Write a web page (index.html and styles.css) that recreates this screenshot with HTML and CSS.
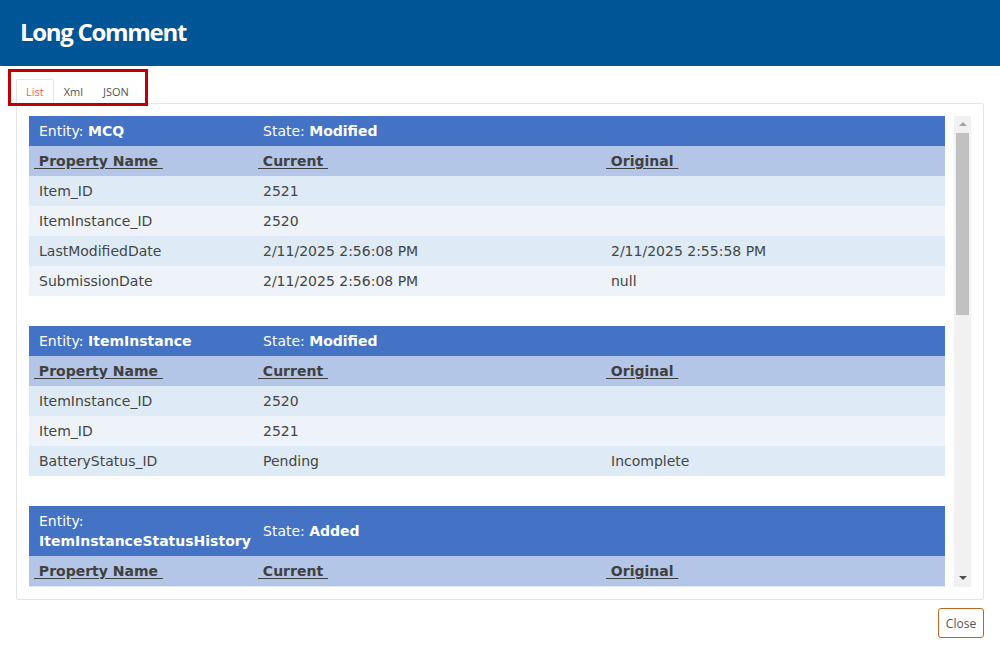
FILE: index.html
```html
<!DOCTYPE html>
<html>
<head>
<meta charset="utf-8">
<title>Long Comment</title>
<link rel="stylesheet" href="styles.css">
</head>
<body>
<div class="modal">
  <header class="modal-header"><h1 class="modal-title">Long Comment</h1></header>
  <div class="modal-body">
    <div class="tabs-wrap">
      <ul class="tabs">
        <li class="tab active">List</li>
        <li class="tab">Xml</li>
        <li class="tab">JSON</li>
      </ul>
      <div class="highlight"></div>
    </div>
    <div class="panel">
      <div class="scroller">
        <div class="scroll-content">
          <table class="entity">
            <colgroup><col class="c1"><col class="c2"><col class="c3"></colgroup>
            <tr class="ent-row"><td>Entity: <b>MCQ</b></td><td colspan="2">State: <b>Modified</b></td></tr>
            <tr class="head-row"><th><a>&nbsp;Property Name&nbsp;</a></th><th><a>&nbsp;Current&nbsp;</a></th><th><a>&nbsp;Original&nbsp;</a></th></tr>
            <tr class="odd"><td>Item_ID</td><td>2521</td><td></td></tr>
            <tr class="even"><td>ItemInstance_ID</td><td>2520</td><td></td></tr>
            <tr class="odd"><td>LastModifiedDate</td><td>2/11/2025 2:56:08 PM</td><td>2/11/2025 2:55:58 PM</td></tr>
            <tr class="even"><td>SubmissionDate</td><td>2/11/2025 2:56:08 PM</td><td>null</td></tr>
          </table>
          <table class="entity">
            <colgroup><col class="c1"><col class="c2"><col class="c3"></colgroup>
            <tr class="ent-row"><td>Entity: <b>ItemInstance</b></td><td colspan="2">State: <b>Modified</b></td></tr>
            <tr class="head-row"><th><a>&nbsp;Property Name&nbsp;</a></th><th><a>&nbsp;Current&nbsp;</a></th><th><a>&nbsp;Original&nbsp;</a></th></tr>
            <tr class="odd"><td>ItemInstance_ID</td><td>2520</td><td></td></tr>
            <tr class="even"><td>Item_ID</td><td>2521</td><td></td></tr>
            <tr class="odd"><td>BatteryStatus_ID</td><td>Pending</td><td>Incomplete</td></tr>
          </table>
          <table class="entity">
            <colgroup><col class="c1"><col class="c2"><col class="c3"></colgroup>
            <tr class="ent-row"><td>Entity: <b>ItemInstanceStatusHistory</b></td><td colspan="2">State: <b>Added</b></td></tr>
            <tr class="head-row"><th><a>&nbsp;Property Name&nbsp;</a></th><th><a>&nbsp;Current&nbsp;</a></th><th><a>&nbsp;Original&nbsp;</a></th></tr>
            <tr class="odd"><td>ItemInstance_ID</td><td>2520</td><td></td></tr>
            <tr class="even"><td>Status_ID</td><td>Pending</td><td></td></tr>
            <tr class="odd"><td>CreatedDate</td><td>2/11/2025 2:56:08 PM</td><td></td></tr>
          </table>
        </div>
        <div class="scrollbar">
          <div class="arrow up"></div>
          <div class="track"><div class="thumb"></div></div>
          <div class="arrow down"></div>
        </div>
      </div>
    </div>
  </div>
  <footer class="modal-footer"><button class="btn-close">Close</button></footer>
</div>
</body>
</html>
```

FILE: styles.css
```css
html, body {
  margin: 0;
  padding: 0;
  background: #ffffff;
}

.modal {
  width: 1000px;
  height: 650px;
  display: flex;
  flex-direction: column;
}

.modal-header {
  height: 66px;
  background: #005596;
  display: flex;
  align-items: center;
  padding-left: 20px;
  box-sizing: border-box;
}

.modal-title {
  margin: 0;
  margin-top: -3px;
  font-family: "Open Sans", "Noto Sans", sans-serif;
  font-weight: 700;
  font-size: 24px;
  letter-spacing: -1.3px;
  color: #ffffff;
}

.modal-body {
  padding: 0 16px;
}

.tabs-wrap {
  position: relative;
  padding-top: 13px;
}

.tabs {
  list-style: none;
  margin: 0;
  padding: 0;
  display: flex;
  height: 25px;
}

.tab {
  font-family: "Open Sans", "Noto Sans", sans-serif;
  font-size: 11px;
  color: #555555;
  padding: 0 9px;
  line-height: 23px;
  height: 25px;
  box-sizing: border-box;
  border: 1px solid transparent;
  border-bottom: none;
}

.tab.active {
  color: #ff5a5a;
  border-color: #e6e6e6;
  background: #ffffff;
  border-radius: 2px 2px 0 0;
  position: relative;
  z-index: 1;
}

.highlight {
  position: absolute;
  left: -8px;
  top: 3px;
  width: 140px;
  height: 37px;
  box-sizing: border-box;
  border: 3px solid #c00000;
  z-index: 3;
  pointer-events: none;
}

.panel {
  border: 1px solid #e6e6e6;
  border-radius: 2px;
  margin-top: -1px;
  padding: 12px;
  height: 497px;
  box-sizing: border-box;
}

.scroller {
  display: flex;
  height: 471px;
}

.scroll-content {
  flex: 1;
  overflow: hidden;
}

.entity {
  width: 916px;
  border-collapse: collapse;
  table-layout: fixed;
  font-family: "DejaVu Sans", Verdana, sans-serif;
  font-size: 14px;
  color: #454545;
  margin-bottom: 30px;
}

.c1 { width: 224px; }
.c2 { width: 348px; }
.c3 { width: 344px; }

.entity td, .entity th {
  padding: 5px 10px;
  line-height: 20px;
  text-align: left;
  vertical-align: middle;
}

.ent-row {
  background: #4472c4;
  color: #ffffff;
}

.head-row {
  background: #b4c6e7;
}

.head-row th {
  padding-left: 5px;
  font-weight: 700;
}

.head-row a {
  color: #404040;
  text-decoration: underline;
  text-underline-offset: 2px;
}

.odd { background: #deebf6; }
.even { background: #eef3f9; }

.scrollbar {
  width: 17px;
  background: #f1f1f1;
  display: flex;
  flex-direction: column;
  align-items: center;
}

.arrow {
  width: 0;
  height: 0;
  border-left: 4px solid transparent;
  border-right: 4px solid transparent;
}

.arrow.up {
  border-bottom: 4px solid #a3a3a3;
  margin: 6px 0 7px;
}

.arrow.down {
  border-top: 4px solid #505050;
  margin: 6px 0 7px;
}

.track {
  flex: 1;
  width: 13px;
}

.thumb {
  width: 13px;
  height: 182px;
  background: #c1c1c1;
}

.modal-footer {
  display: flex;
  justify-content: flex-end;
  padding: 8px 16px 0 0;
}

.btn-close {
  font-family: "Open Sans", "Noto Sans", sans-serif;
  font-size: 12px;
  color: #555555;
  background: #ffffff;
  border: 1px solid #c0661e;
  border-radius: 3px;
  height: 30px;
  width: 46px;
  padding: 0;
}
```
